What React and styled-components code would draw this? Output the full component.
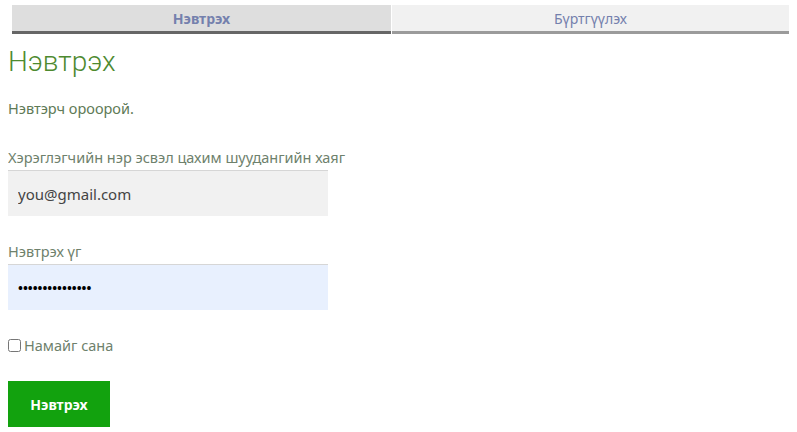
import React, { useState } from 'react';
import styled, { createGlobalStyle } from 'styled-components';

const Global = createGlobalStyle`
    body{
        margin:5px 8px 8px 8px;
        background:#fff;
        font-family:"Noto Sans","Liberation Sans",sans-serif;
    }
`;

const Tabs = styled.div`
    display:flex;
    margin:0 0 0 4px;
`;

const Tab = styled.div`
    flex:${(p) => (p.active ? '0 0 379px' : '1')};
    height:26px;
    display:flex;
    justify-content:center;
    align-items:center;
    font-size:14px;
    color:#7480ad;
    font-weight:${(p) => (p.active ? 700 : 400)};
    background:${(p) => (p.active ? '#dedede' : '#f1f1f1')};
    border-bottom:3px solid ${(p) => (p.active ? '#666' : '#9b9b9b')};
    margin-right:${(p) => (p.active ? '1px' : '0')};
`;

const Title = styled.h1`
    margin:8px 0 0 0;
    font-family:Roboto,"Liberation Sans",sans-serif;
    font-weight:300;
    font-size:28px;
    line-height:40px;
    color:#4e8a2f;
`;

const Intro = styled.p`
    margin:16px 0 0 0;
    font-size:14.5px;
    color:#5e7a56;
`;

const Label = styled.label`
    display:block;
    margin-top:${(p) => p.top}px;
    font-size:14.5px;
    line-height:20px;
    color:#6e816c;
`;

const Input = styled.input`
    display:block;
    box-sizing:border-box;
    width:320px;
    height:46px;
    margin-top:3px;
    padding:0 10px;
    border:none;
    border-top:1px solid #d6d6d6;
    background:${(p) => p.bg};
    font-family:"Noto Sans","Liberation Sans",sans-serif;
    font-size:${(p) => (p.type === 'password' ? '13px' : '15px')};
    font-weight:${(p) => (p.type === 'password' ? 700 : 400)};
    color:${(p) => (p.type === 'password' ? '#000' : '#444')};
    outline:none;
`;

const Remember = styled.label`
    display:flex;
    align-items:center;
    margin-top:25px;
    font-size:14.5px;
    color:#6e816c;
    input{
        margin:0 3px 0 0;
        width:13px;
        height:13px;
    }
`;

const Submit = styled.button`
    display:block;
    margin-top:26px;
    width:102px;
    height:46px;
    border:none;
    background:#12a20e;
    color:#fff;
    font-family:"Noto Sans","Liberation Sans",sans-serif;
    font-weight:700;
    font-size:14px;
    cursor:pointer;
`;

const App = () => {
    const [tab, setTab] = useState(0);
    return (
        <div>
            <Global />
            <Tabs>
                <Tab active={tab === 0} onClick={() => setTab(0)}>Нэвтрэх</Tab>
                <Tab active={tab === 1} onClick={() => setTab(1)}>Бүртгүүлэх</Tab>
            </Tabs>
            <Title>Нэвтрэх</Title>
            <Intro>Нэвтэрч ороорой.</Intro>
            <Label top={29}>Хэрэглэгчийн нэр эсвэл цахим шуудангийн хаяг</Label>
            <Input bg="#f1f1f1" defaultValue="you@gmail.com" />
            <Label top={25}>Нэвтрэх үг</Label>
            <Input bg="#e8f0fe" type="password" defaultValue="123456789012345" />
            <Remember><input type="checkbox" />Намайг сана</Remember>
            <Submit>Нэвтрэх</Submit>
        </div>
    );
};

export default App;
